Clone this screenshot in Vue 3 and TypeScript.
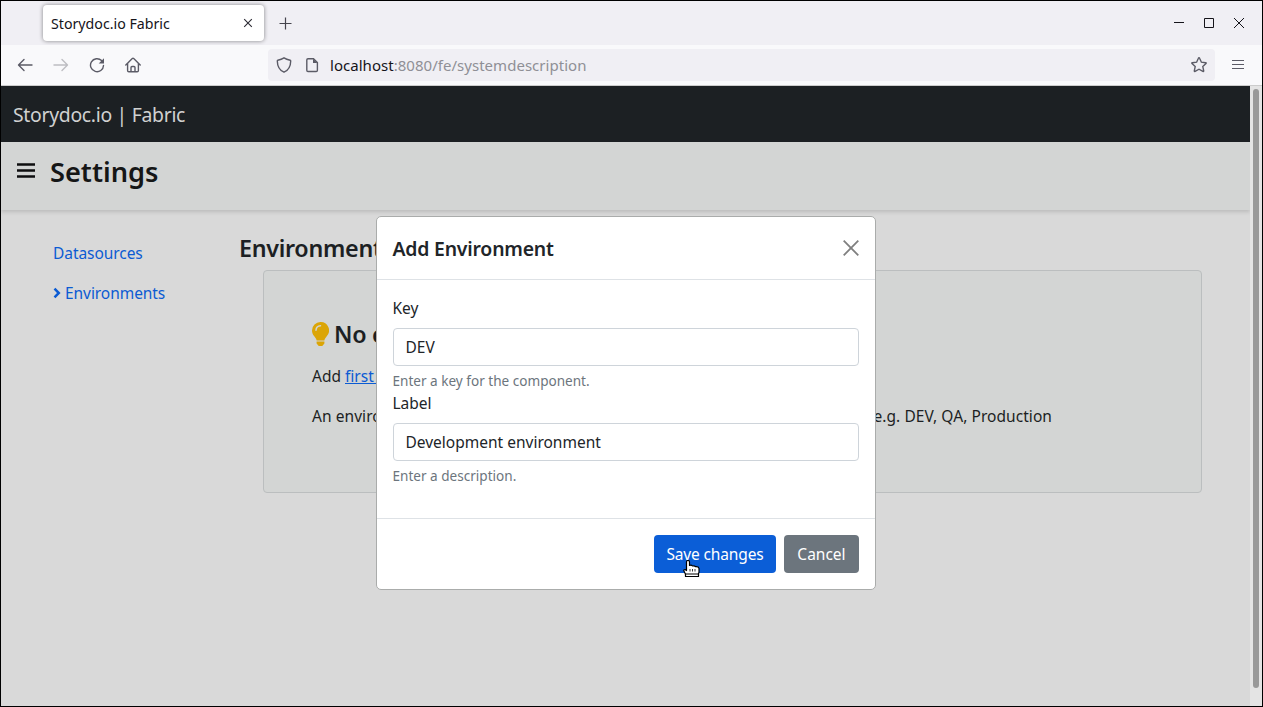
<script setup lang="ts">
import { ref } from 'vue'

interface Field {
  id: string
  label: string
  value: string
  help: string
}

const fields = ref<Field[]>([
  { id: 'key', label: 'Key', value: 'DEV', help: 'Enter a key for the component.' },
  { id: 'label', label: 'Label', value: 'Development environment', help: 'Enter a description.' },
])
</script>

<template>
  <div class="window">
    <div class="tabbar">
      <div class="tab">
        <span class="tab-title">Storydoc.io Fabric</span>
        <svg class="tab-close" width="10" height="10" viewBox="0 0 10 10"><path d="M1.200 1.200l7.600 7.600M8.800 1.200l-7.600 7.600" /></svg>
      </div>
      <svg class="new-tab" width="13" height="13" viewBox="0 0 13 13"><path d="M6.5 .5v12M.5 6.5h12" /></svg>
      <div class="controls">
        <svg width="10" height="10" viewBox="0 0 10 10"><path d="M0 4.5h10" /></svg>
        <svg width="10" height="10" viewBox="0 0 10 10"><path d="M.5 .5h9v9h-9z" /></svg>
        <svg width="10" height="10" viewBox="0 0 10 10"><path d="M0 0l10 10M10 0L0 10" /></svg>
      </div>
    </div>

    <div class="toolbar">
      <div class="nav-icons">
        <svg width="16" height="16" viewBox="0 0 16 16"><path d="M15 8H1.8M7 2.5L1.5 8 7 13.500" /></svg>
        <svg class="disabled" width="16" height="16" viewBox="0 0 16 16"><path d="M1 8h13.200M9 2.500L14.500 8 9 13.500" /></svg>
        <svg width="16" height="16" viewBox="0 0 16 16"><path d="M12.600 3.600A6.500 6.500 0 1 0 14.500 8.400" /><path class="solid" d="M15 1.200v5.300H9.700z" /></svg>
        <svg class="home" width="16" height="16" viewBox="0 0 16 16"><path d="M.8 7.900L7.300 1.500q.7-.6 1.400 0L15.200 7.900M2.600 6.400v7.100q0 1.200 1.200 1.200h8.400q1.200 0 1.200-1.200V6.400M6 14.500v-4q0-1 1-1h2q1 0 1 1v4" /></svg>
      </div>
      <div class="urlbar">
        <svg width="16" height="16" viewBox="0 0 16 16"><path d="M8 .9Q10.500 2.500 14.200 3.200q.5.1.5.7Q14.600 12.100 8 15.200 1.400 12.100 1.300 3.900q0-.6.5-.7Q5.500 2.500 8 .9z" /></svg>
        <svg class="doc" width="14" height="16" viewBox="0 0 14 16"><path d="M3 1.700h5.500l3.900 3.900v7.700q0 1.200-1.200 1.200H3q-1.200 0-1.200-1.200V2.900Q1.800 1.700 3 1.700z" /><path class="solid" d="M8 1.700v4.400h4.400z" /></svg>
        <span class="url"><b>localhost</b>:8080/fe/systemdescription</span>
        <svg class="star" width="18" height="18" viewBox="0 0 18 18"><path d="M9 1.700q.4 0 .6.500l1.800 4 4.300.5q.9.2.3.9l-3.200 3 .9 4.300q.1.900-.8.500L9 13.200l-3.900 2.200q-.9.400-.8-.5l.9-4.300-3.200-3q-.6-.7.3-.9l4.300-.5 1.800-4q.2-.5.6-.5z" /></svg>
      </div>
      <svg class="burger" width="12" height="12" viewBox="0 0 12 12"><path d="M0 1.500h12M0 5.500h12M0 9.500h12" /></svg>
    </div>

    <div class="viewport">
      <div class="page">
        <nav class="brandbar"><span class="brand">Storydoc.io | Fabric</span></nav>
        <header class="page-head">
          <svg width="20" height="18" viewBox="0 0 20 18"><path d="M1 2.500h18M1 8.500h18M1 14.500h18" /></svg>
          <h1>Settings</h1>
        </header>
        <div class="content">
          <aside>
            <a>Datasources</a>
            <a class="current">
              <svg width="9" height="12" viewBox="0 0 9 12"><path d="M1.500 1.700L5.800 6 1.500 10.300" /></svg>
              <span>Environments</span>
            </a>
          </aside>
          <main>
            <h2>Environments</h2>
            <section class="card">
              <h3>
                <svg width="17" height="24" viewBox="0 0 17 24"><path class="bulb" d="M8.500 0A8.400 8.400 0 0 0 0 8.400c0 2.200.8 4.100 2.100 5.600.9 1 2.100 2.800 2.500 4.200v.2h7.800v-.2c.4-1.400 1.600-3.200 2.500-4.200A8.400 8.400 0 0 0 8.500 0zM4.600 19.500v2L6.300 23.500q.4.500 1 .5h2.400q.6 0 1-.5l1.700-2v-2z" /><path class="gleam" d="M4 8.200Q4.200 4 8.500 3.700" /></svg>
                <span>No environments</span>
              </h3>
              <p>Add <a class="link">first environment</a></p>
              <p class="hint"><span>An environment is a deployment of the system</span><span>e.g. DEV, QA, Production</span></p>
            </section>
          </main>
        </div>
      </div>
      <div class="scrollbar"><div class="thumb"></div></div>
    </div>

    <div class="modal">
      <div class="modal-head">
        <h4>Add Environment</h4>
        <svg width="16" height="16" viewBox="0 0 16 16"><path d="M.7 .7l14.600 14.600M15.300 .7L.7 15.300" /></svg>
      </div>
      <div class="modal-body">
        <div v-for="f in fields" :key="f.id" class="field">
          <label :for="f.id">{{ f.label }}</label>
          <input :id="f.id" v-model="f.value" type="text" />
          <small>{{ f.help }}</small>
        </div>
      </div>
      <div class="modal-foot">
        <button class="save">Save changes</button>
        <button class="cancel">Cancel</button>
      </div>
    </div>

    <svg class="cursor" width="17" height="18" viewBox="0 0 17 18"><path d="M3.500 10.500V2q0-1.500 1.500-1.500T6.500 2v3.500q2-.8 3 .5 2-.6 3 .6 3-.3 3.500 1.700v4l-1 3H3L.8 10.800Q.5 9.500 2 9.500z" /><path class="thin" d="M7 9v2.500M9.500 9v2.500M12 9v2.500" /><path d="M2.500 14h13v2.500h-13z" /></svg>
  </div>
</template>

<style>
body {
  margin: 0;
  overflow: hidden;
}
</style>

<style scoped>
* {
  box-sizing: border-box;
}
.window {
  position: relative;
  width: 1263px;
  height: 707px;
  border: 1px solid #000;
  display: flex;
  flex-direction: column;
  overflow: hidden;
  font-family: "Noto Sans", "Open Sans", sans-serif;
  font-size: 15.5px;
  line-height: 24px;
  color: #1c1f23;
}
svg {
  display: block;
  flex: none;
  fill: none;
}
h1, h2, h3, h4, p {
  margin: 0;
  font-weight: 500;
}
.tabbar {
  height: 44px;
  flex: none;
  background: #f0eff4;
  display: flex;
  align-items: center;
  padding-left: 42px;
}
.tab {
  width: 221px;
  height: 36px;
  background: #fff;
  border-radius: 4px;
  box-shadow: 0 0 4px rgba(0, 0, 0, 0.45);
  display: flex;
  align-items: center;
  justify-content: space-between;
  padding: 0 11px 0 8px;
}
.tab-title {
  padding-top: 2px;
  font-size: 14.2px;
  color: #15141a;
  white-space: nowrap;
}
.tab-close {
  stroke: #2b2a33;
  stroke-width: 1.1;
}
.new-tab {
  margin-left: 15px;
  stroke: #45444d;
  stroke-width: 1.2;
}
.controls {
  margin-left: auto;
  margin-right: 18px;
  display: flex;
  gap: 20px;
  stroke: #15141a;
  stroke-width: 1;
}
.toolbar {
  height: 41px;
  flex: none;
  background: #f9f9fb;
  border-bottom: 1px solid #cccccc;
  display: flex;
  align-items: center;
}
.nav-icons {
  display: flex;
  gap: 20px;
  margin-left: 16px;
  width: 251px;
  stroke: #5b5b66;
  stroke-width: 1.4;
  stroke-linecap: round;
  stroke-linejoin: round;
}
.nav-icons .disabled {
  stroke: #bdbdc2;
}
.home {
  margin-left: -0.5px;
}
.solid {
  fill: #5b5b66;
  stroke: none;
}
.urlbar {
  width: 947px;
  height: 32px;
  background: #f0eff4;
  border-radius: 4px;
  display: flex;
  align-items: center;
  padding: 0 7px 0 8px;
  stroke: #5b5b66;
  stroke-width: 1.4;
}
.doc {
  margin-left: 13px;
}
.url {
  margin-left: 11px;
  font-size: 15px;
  letter-spacing: 0.03px;
  color: #8f8f96;
  white-space: nowrap;
}
.url b {
  font-weight: 400;
  color: #15141a;
}
.star {
  margin-left: auto;
}
.burger {
  margin-left: 17px;
  stroke: #5b5b66;
  stroke-width: 1.2;
}
.viewport {
  flex: 1;
  min-height: 0;
  display: flex;
}
.page {
  width: 1249px;
  background: #d9d9d9;
  display: flex;
  flex-direction: column;
}
.brandbar {
  height: 56px;
  background: #1c2023;
  display: flex;
  align-items: center;
  padding: 2px 0 0 12px;
}
.brand {
  font-size: 19.4px;
  letter-spacing: -0.3px;
  line-height: 30px;
  color: #d0d1d1;
}
.page-head {
  height: 68px;
  background: #d3d5d4;
  box-shadow: 0 2px 4px rgba(0, 0, 0, 0.14);
  display: flex;
  padding: 13px 0 0 15px;
}
.page-head svg {
  margin-top: 7px;
  stroke: #0e0e0f;
  stroke-width: 2.7;
}
.page-head h1 {
  margin-left: 14px;
  font-size: 27.2px;
  line-height: 34px;
  font-weight: 600;
  color: #151616;
}
.content {
  display: flex;
  padding-top: 24px;
}
aside {
  width: 238px;
  padding: 7px 0 0 52px;
  display: flex;
  flex-direction: column;
  gap: 16px;
  color: #0b5bd3;
  letter-spacing: -0.06px;
}
.current {
  display: flex;
  align-items: center;
}
.current svg {
  margin-right: 3px;
  stroke: #0b5bd3;
  stroke-width: 2.5;
}
main {
  width: 963px;
}
h2, h3 {
  font-size: 23.3px;
  line-height: 28px;
  font-weight: 600;
  letter-spacing: -0.3px;
}
.card {
  margin: 8px 0 0 24px;
  height: 223px;
  border: 1px solid #bbbebf;
  border-radius: 4px;
  background: #d3d5d4;
  padding: 49px 48px 0;
}
.card h3 {
  display: flex;
  align-items: center;
  gap: 5px;
}
.bulb {
  fill: #dba506;
}
.gleam {
  stroke: #d3d5d4;
  stroke-width: 1.5;
  stroke-linecap: round;
}
.card p {
  margin-top: 16px;
  font-weight: 400;
}
.link {
  color: #0b5bd3;
  text-decoration: underline;
}
.hint {
  width: 740px;
  display: flex;
  justify-content: space-between;
  letter-spacing: 0.06px;
}
.scrollbar {
  width: 12px;
  background: #e4e4e4;
  padding: 3px 3px 0;
}
.thumb {
  height: 599px;
  border-radius: 3px;
  background: #999;
}
.modal {
  position: absolute;
  left: 375px;
  top: 215px;
  width: 500px;
  height: 374px;
  border: 1px solid #aaacab;
  border-radius: 5px;
  background: #fff;
  color: #212529;
}
.modal-head {
  height: 63px;
  border-bottom: 1px solid #dee2e6;
  display: flex;
  align-items: center;
  justify-content: space-between;
  padding: 0 16px 0 15.5px;
}
.modal-head svg {
  stroke: #7f7f7f;
  stroke-width: 1.8;
}
.modal-head h4 {
  padding-top: 2px;
  font-size: 19.4px;
  line-height: 30px;
  font-weight: 600;
  letter-spacing: -0.2px;
}
.modal-body {
  height: 238px;
  padding: 16px;
}
.field {
  display: flex;
  flex-direction: column;
  height: 95px;
}
.field label,
.field small {
  margin-left: -0.5px;
}
.field input {
  margin-top: 8px;
  height: 38px;
  border: 1px solid #ced4da;
  border-radius: 4px;
  padding: 0 11.5px;
  font: inherit;
  color: inherit;
  background: #fff;
}
.field small {
  margin-top: 4px;
  font-size: 13.57px;
  line-height: 21px;
  color: #6c757d;
}
.modal-foot {
  height: 71px;
  border-top: 1px solid #dee2e6;
  display: flex;
  justify-content: flex-end;
  gap: 8px;
  padding: 16px;
}
button {
  height: 38px;
  border: 0;
  border-radius: 4px;
  padding: 0;
  font: inherit;
  color: #fff;
}
.save {
  width: 122px;
  background: #0b5ed7;
  letter-spacing: -0.15px;
}
.cancel {
  width: 75px;
  background: #6c757d;
}
.cursor {
  position: absolute;
  left: 682px;
  top: 559px;
}
.cursor path {
  fill: #fff;
  stroke: #000;
  stroke-width: 1.2;
  stroke-linejoin: round;
}
.cursor .thin {
  stroke-width: 0.8;
}
</style>
